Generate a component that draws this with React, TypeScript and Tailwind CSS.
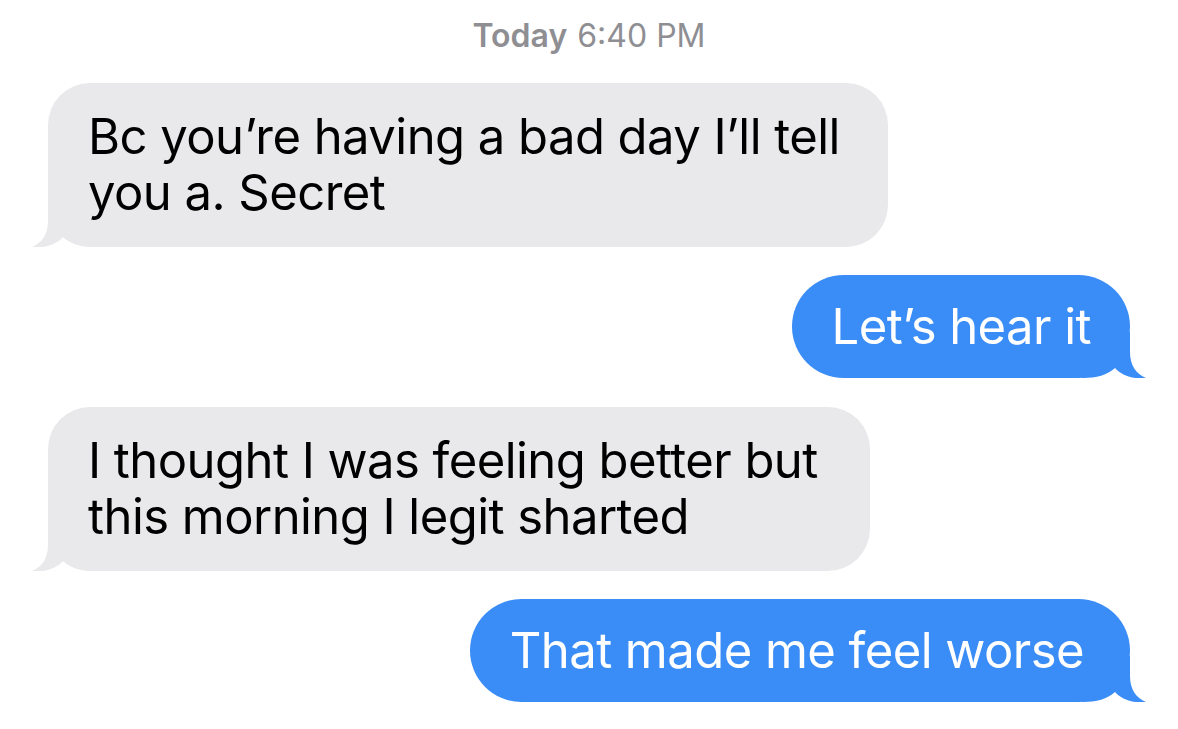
import React from "react";

function Tail({ color, side }: { color: string; side: "left" | "right" }) {
  return (
    <svg
      width="64"
      height="46"
      viewBox="0 0 64 46"
      className={
        side === "left"
          ? "absolute bottom-0 left-[-16px]"
          : "absolute bottom-0 right-[-16px] -scale-x-100"
      }
    >
      <path
        d="M16 0 L16 20 C16 33 10 42 0 46 C 12 47.5 24 44 31 36 C 39 43 49 46 64 46 L 64 0 Z"
        fill={color}
      />
    </svg>
  );
}

function Gray({ children, w }: { children: React.ReactNode; w: string }) {
  return (
    <div className="flex pl-[48px]">
      <div className={`relative rounded-[42px] bg-[#e9e9eb] pl-[40px] pr-[30px] py-[26px] text-black ${w}`}>
        <Tail color="#e9e9eb" side="left" />
        <p className="relative leading-[56px]">{children}</p>
      </div>
    </div>
  );
}

function Blue({ children, pr }: { children: React.ReactNode; pr: string }) {
  return (
    <div className="flex justify-end pr-[48px]">
      <div className={`relative flex h-[103px] items-center rounded-[52px] bg-[#3a8df7] pl-[40px] text-white ${pr}`}>
        <Tail color="#3a8df7" side="right" />
        <p className="relative leading-[56px] whitespace-nowrap">{children}</p>
      </div>
    </div>
  );
}

export default function App() {
  return (
    <div
      className="flex h-[729px] w-[1178px] flex-col bg-white text-[49px] tracking-[-0.55px]"
      style={{ fontFamily: "Inter, 'Noto Sans', sans-serif" }}
    >
      <div className="flex h-[83px] justify-center pt-[15px] text-[32px] leading-[42px] tracking-normal text-[#8e8e93]">
        <span className="font-semibold">Today</span>
        <span className="ml-[10px]">6:40 PM</span>
      </div>
      <Gray w="w-[840px]">Bc you’re having a bad day I’ll tell you a. Secret</Gray>
      <div className="h-[28px]" />
      <Blue pr="pr-[39px]">Let’s hear it</Blue>
      <div className="h-[29px]" />
      <Gray w="w-[822px]">I thought I was feeling better but this morning I legit sharted</Gray>
      <div className="h-[28px]" />
      <Blue pr="pr-[46px]">That made me feel worse</Blue>
    </div>
  );
}
